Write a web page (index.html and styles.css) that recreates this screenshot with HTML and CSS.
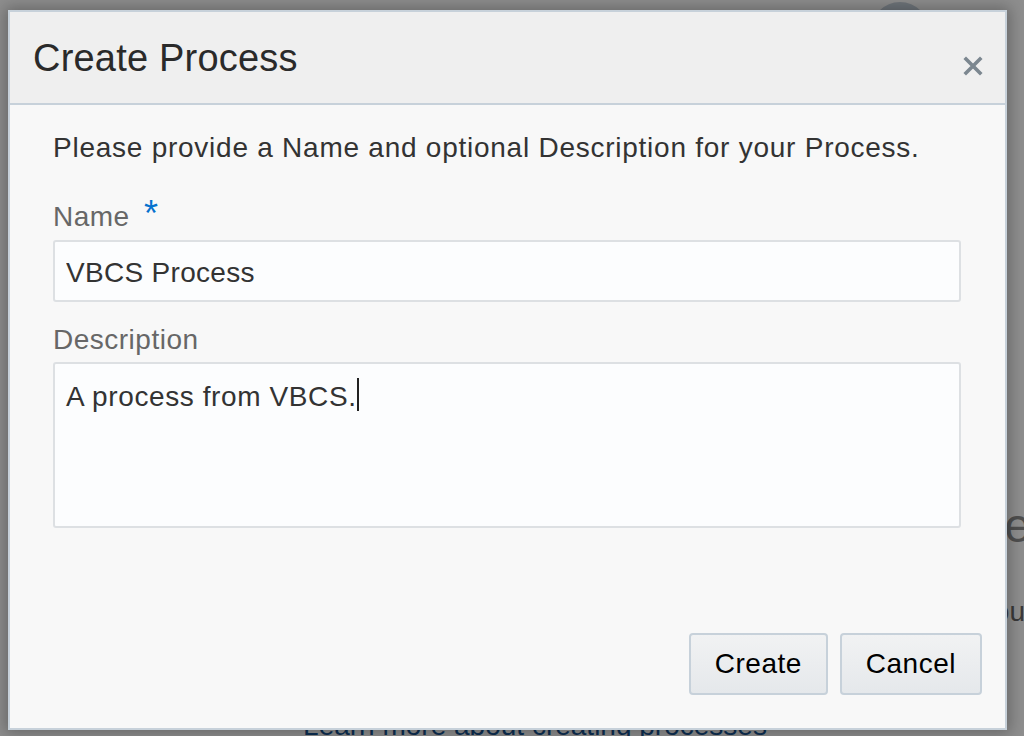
FILE: index.html
```html
<!DOCTYPE html>
<html lang="en">
<head>
    <meta charset="UTF-8">
    <title>Create Process</title>
    <link rel="stylesheet" href="styles.css">
</head>
<body>

    <!-- Page behind the modal (dimmed) -->
    <div class="page-behind">
        <div class="avatar"></div>
        <div class="hero-line">Welcome</div>
        <div class="sub-line">Processes created by you</div>
        <div class="learn-link">Learn more about creating processes</div>
    </div>

    <!-- Create Process dialog -->
    <div class="dialog" role="dialog" aria-labelledby="dialog-title">
        <header class="dialog-header">
            <h1 id="dialog-title">Create Process</h1>
            <button class="close-button" aria-label="Close">
                <svg width="20" height="20" viewBox="0 0 20 20">
                    <path d="M3 3 L17 17 M17 3 L3 17" stroke="#7c8790" stroke-width="3.6" stroke-linecap="square" fill="none"/>
                </svg>
            </button>
        </header>

        <div class="dialog-body">
            <p class="intro">Please provide a Name and optional Description for your Process.</p>

            <div class="form-group">
                <label for="process-name" class="field-label">Name <span class="required">*</span></label>
                <input type="text" id="process-name" class="field" value="VBCS Process">
            </div>

            <div class="form-group form-group-desc">
                <label class="field-label">Description</label>
                <div class="field field-multiline" role="textbox">A process from VBCS.<span class="caret"></span></div>
            </div>
        </div>

        <footer class="dialog-footer">
            <button class="btn">Create</button>
            <button class="btn">Cancel</button>
        </footer>
    </div>

</body>
</html>
```

FILE: styles.css
```css
/* Reset */
* {
    box-sizing: border-box;
    margin: 0;
    padding: 0;
}

html, body {
    width: 100%;
    height: 100%;
    overflow: hidden;
}

body {
    font-family: "Liberation Sans", Arial, sans-serif;
    background-color: #8e8e8e;
    color: #333333;
    position: relative;
}

/* Page behind overlay */
.page-behind {
    height: 736px;
    display: flex;
    flex-direction: column;
    overflow: hidden;
}

.page-behind > * {
    flex-shrink: 0;
}

.avatar {
    align-self: flex-end;
    width: 58px;
    height: 58px;
    margin: 2px 95px 0 0;
    border-radius: 50%;
    background-color: #6f757b;
}

.hero-line {
    align-self: flex-end;
    margin: 442px -7px 0 0;
    font-size: 48px;
    line-height: 48px;
    color: #4f4f4f;
    white-space: nowrap;
}

.sub-line {
    align-self: flex-end;
    margin: 45px -1px 0 0;
    font-size: 28px;
    line-height: 34px;
    color: #3a3a3a;
    white-space: nowrap;
}

.learn-link {
    align-self: center;
    margin: 80px 0 0 46px;
    font-size: 28px;
    line-height: 34px;
    color: #0d2f52;
    white-space: nowrap;
}

/* Dialog */
.dialog {
    position: absolute;
    top: 10px;
    left: 8px;
    width: 999px;
    height: 720px;
    display: flex;
    flex-direction: column;
    background-color: #f8f8f8;
    border: 2px solid #c7d1da;
    box-shadow: 0 0 14px 3px rgba(0, 0, 0, 0.28);
}

.dialog-header {
    height: 93px;
    display: flex;
    align-items: center;
    justify-content: space-between;
    padding: 0 22px 0 23px;
    background-color: #efefef;
    border-bottom: 2px solid #c7d1da;
}

.dialog-header h1 {
    font-size: 38px;
    font-weight: normal;
    line-height: 38px;
    letter-spacing: 0.2px;
    color: #2a2a2a;
}

.close-button {
    width: 20px;
    height: 20px;
    margin-top: 16px;
    border: none;
    background: none;
    cursor: pointer;
}

.close-button svg {
    display: block;
}

.dialog-body {
    padding: 26px 44px 0 43px;
}

.intro {
    font-size: 28px;
    line-height: 34px;
    letter-spacing: 0.75px;
    color: #333333;
}

.form-group {
    margin-top: 35px;
}

.form-group-desc {
    margin-top: 21px;
}

.field-label {
    display: block;
    margin-bottom: 6px;
    font-size: 28px;
    line-height: 34px;
    letter-spacing: 0.5px;
    color: #676767;
}

.form-group-desc .field-label {
    margin-bottom: 5px;
}

.required {
    margin-left: 6px;
    font-size: 36px;
    line-height: 0;
    color: #0572ce;
}

.field {
    display: block;
    width: 100%;
    height: 62px;
    padding: 3px 11px 0;
    font-family: inherit;
    font-size: 28px;
    letter-spacing: 0.3px;
    color: #333333;
    background-color: #fcfdfe;
    border: 2px solid #dde0e3;
    border-radius: 3px;
    outline: none;
}

.field-multiline {
    height: 166px;
    padding: 14px 11px 0;
    line-height: 34px;
    letter-spacing: 0.6px;
}

.caret {
    display: inline-block;
    width: 0;
    height: 33px;
    border-left: 2px solid #222222;
    vertical-align: -5px;
}

/* Footer buttons */
.dialog-footer {
    margin-top: auto;
    display: flex;
    justify-content: flex-end;
    gap: 12px;
    padding: 0 23px 33px;
}

.btn {
    height: 62px;
    padding: 0 24px;
    font-family: inherit;
    font-size: 28px;
    letter-spacing: 0.5px;
    color: #000000;
    background: linear-gradient(#f1f2f3, #e5e8eb);
    border: 2px solid #c7d1da;
    border-radius: 4px;
    cursor: pointer;
}
```
